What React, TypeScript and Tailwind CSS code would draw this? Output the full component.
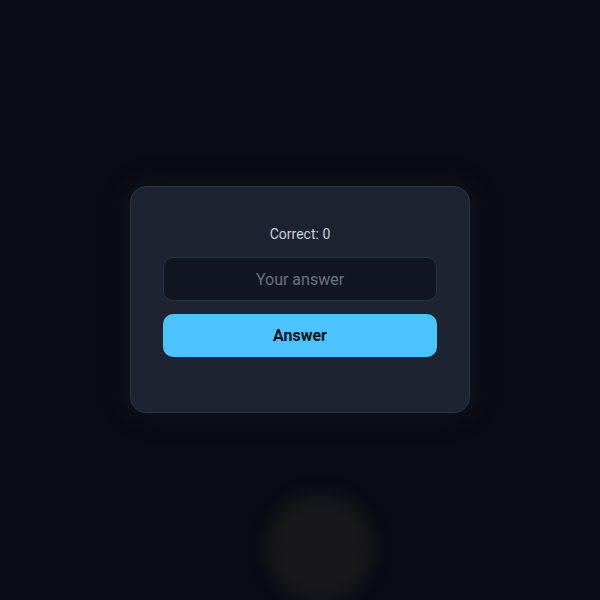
import React from 'react';

export default function App() {
  return (
    <div className="relative w-[600px] h-[600px] overflow-hidden bg-[#0a0b14] font-['Roboto',sans-serif]">
      <div className="absolute left-[266px] top-[494px] w-[108px] h-[108px] rounded-full bg-[#18181c] blur-[8px]" />
      <div className="relative flex justify-center pt-[186px]">
        <div className="w-[340px] h-[227px] rounded-2xl border border-[#2c3344] bg-[#1e2332] shadow-[0_0_24px_rgba(20,24,36,0.9)] px-[32px] pt-[36px] flex flex-col items-center">
          <div className="text-[14px] leading-[22px] text-[#c9cfda]">Correct: 0</div>
          <input
            className="mt-[12px] w-full h-[44px] rounded-[10px] border border-[#2a3142] bg-[#111622] text-center text-[16px] text-[#e5e7eb] placeholder:text-[#6b7280] outline-none"
            placeholder="Your answer"
          />
          <button className="mt-[13px] w-full h-[43px] rounded-[10px] bg-[#4cc2ff] text-[16px] font-bold text-[#0c1322]">
            Answer
          </button>
        </div>
      </div>
    </div>
  );
}
